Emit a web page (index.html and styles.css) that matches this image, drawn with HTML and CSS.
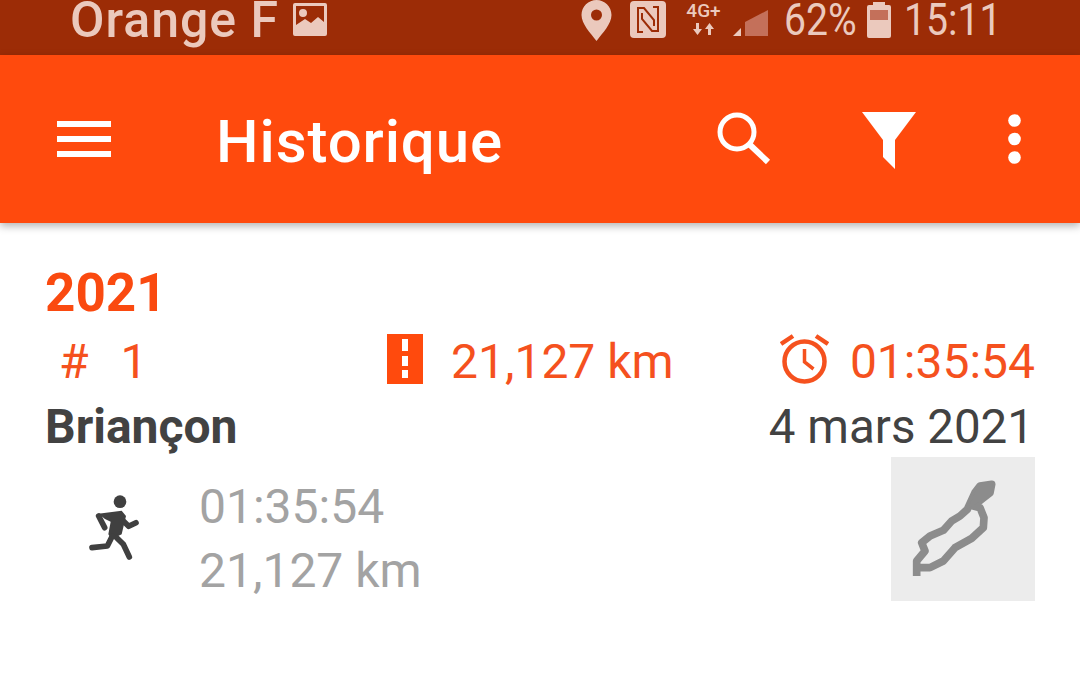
FILE: index.html
```html
<!DOCTYPE html>
<html lang="fr">
<head>
    <meta charset="UTF-8">
    <meta name="viewport" content="width=device-width, initial-scale=1.0">
    <title>Historique</title>
    <link rel="stylesheet" href="styles.css">
</head>
<body>
    <div class="status-bar">
        <div class="status-left">
            <span class="carrier">Orange F</span>
            <svg class="ic-picture" viewBox="0 0 34 33"><path fill-rule="evenodd" d="M2 0h30a2 2 0 0 1 2 2v29a2 2 0 0 1-2 2H2a2 2 0 0 1-2-2V2a2 2 0 0 1 2-2zM3 3v19l9-6 6 4 7-6 6 5V3zM10 6a4 4 0 1 1 0 8 4 4 0 0 1 0-8z"/></svg>
        </div>
        <div class="status-right">
            <svg class="ic-pin" viewBox="0 0 30 41"><path fill-rule="evenodd" d="M15 0c8 0 15 6.500 15 15 0 9-9 18-15 26C9 33 0 24 0 15 0 6.500 7 0 15 0zm0 9.500a5.500 5.500 0 1 0 0 11 5.500 5.500 0 0 0 0-11z"/></svg>
            <svg class="ic-nfc" viewBox="0 0 36 37">
                <rect width="36" height="37" rx="4"/>
                <path d="M13 31H8V7h6l10 12v6M23 6h5v24h-6L12 18v-6" fill="none" stroke="#9c2c06" stroke-width="2"/>
            </svg>
            <div class="net">
                <span class="net-label">4G+</span>
                <svg class="ic-arrows" viewBox="0 0 22 12"><path d="M3 0h3v6h3l-4.500 6L0 6h3zM18 12h-3V6h-3l4.500-6L21 6h-3z"/></svg>
            </div>
            <svg class="ic-signal" viewBox="0 0 36 26"><path d="M0 26l8-8v8z"/><path class="dim" d="M12 26V12L35 0v26z"/></svg>
            <span class="status-text pct">62%</span>
            <svg class="ic-battery" viewBox="0 0 24 36"><path d="M6 0h12v3h4a2 2 0 0 1 2 2v29a2 2 0 0 1-2 2H2a2 2 0 0 1-2-2V5a2 2 0 0 1 2-2h4z"/><rect class="dim" x="3" y="8" width="18" height="10"/></svg>
            <span class="status-text clock">15:11</span>
        </div>
    </div>

    <header class="toolbar">
        <svg class="ic-menu" viewBox="0 0 54 36"><path d="M0 0h54v6H0zM0 15h54v6H0zM0 30h54v6H0z"/></svg>
        <h1 class="title">Historique</h1>
        <svg class="ic-search" viewBox="0 0 54 54"><circle cx="20" cy="20" r="17" fill="none" stroke="#fff" stroke-width="5"/><path d="M31 31l20 19" fill="none" stroke="#fff" stroke-width="6"/></svg>
        <svg class="ic-filter" viewBox="0 0 54 57"><path d="M0 0h54L33 28v29L21 45V28z"/></svg>
        <svg class="ic-more" viewBox="0 0 13 50"><circle cx="6.500" cy="6.500" r="6.300"/><circle cx="6.500" cy="25" r="6.300"/><circle cx="6.500" cy="43.500" r="6.300"/></svg>
    </header>

    <main class="content">
        <div class="year">2021</div>

        <div class="summary">
            <div class="sum-count"><span class="hash">#</span><span>1</span></div>
            <div class="sum-dist">
                <svg class="ic-road" viewBox="0 0 36 50"><path fill-rule="evenodd" d="M0 0h36v50H0zM15 5v12h6V5zm0 17v10h6V22zm0 14v8h6v-8z"/></svg>
                <span>21,127 km</span>
            </div>
            <div class="sum-time">
                <svg class="ic-alarm" viewBox="0 0 49 50" fill="none" stroke="#f5511e"><circle cx="24.500" cy="27.500" r="20" stroke-width="4.500"/><path d="M24.500 15v13l9 7" stroke-width="3.500"/><path d="M1 10L13 2M48 10L36 2" stroke-width="4.500"/></svg>
                <span>01:35:54</span>
            </div>
        </div>

        <div class="activity-head">
            <span class="place">Briançon</span>
            <span class="date">4 mars 2021</span>
        </div>

        <div class="activity">
            <svg class="ic-run" viewBox="0 0 270 270">
                <circle cx="150" cy="62" r="19" fill="#404040"/>
                <path d="M85 98L155 89L168 105L155 160L125 175L115 160L122 122L105 114z" fill="#404040"/>
                <path d="M86 105L104 140M160 120L176 136L198 125M127 165L112 195L66 200M140 170L160 190L178 228" fill="none" stroke="#404040" stroke-width="17" stroke-linecap="round" stroke-linejoin="round"/>
            </svg>
            <div class="activity-stats">
                <div>01:35:54</div>
                <div>21,127 km</div>
            </div>
            <svg class="track" viewBox="33 18 432 432">
                <path d="M110 375V330L135 300L125 275L150 255L190 238L215 210L240 195L262 175L285 125L300 105L335 100L330 125L305 145L280 165L300 170L312 200L310 230L275 262L225 290L190 330L150 350L110 350" fill="none" stroke="#8c8c8c" stroke-width="23" stroke-linejoin="round"/>
                <path d="M262 175L285 125L300 97L340 94L334 128L305 148z" fill="#8c8c8c"/>
            </svg>
        </div>
    </main>
</body>
</html>
```

FILE: styles.css
```css
body {
    margin: 0;
    background-color: #fff;
    font-family: Roboto, sans-serif;
    overflow: hidden;
}

svg {
    display: block;
    flex: none;
}

.status-bar {
    height: 55px;
    background-color: #9c2c06;
    color: #ebc9bd;
    fill: #ebc9bd;
    display: flex;
    justify-content: space-between;
    overflow: hidden;
}

.status-bar .dim {
    fill: #c4705a;
}

.status-left {
    display: flex;
    align-items: center;
    padding-left: 70px;
    height: 40px;
}

.carrier {
    width: 208px;
    font-size: 50px;
    font-weight: 500;
    letter-spacing: 1px;
    line-height: 40px;
    white-space: nowrap;
}

.ic-picture {
    width: 34px;
    height: 33px;
    margin: 0 0 1px 15px;
}

.status-right {
    display: flex;
    align-items: center;
    padding-right: 82px;
    height: 41px;
}

.status-text {
    font-size: 45px;
    line-height: 40px;
    white-space: nowrap;
    margin-bottom: 2px;
    transform: scaleX(0.87);
    transform-origin: left;
}

.pct {
    width: 70px;
    margin-left: 15px;
}

.clock {
    width: 94px;
    margin-left: 13px;
}

.ic-pin {
    width: 31px;
    height: 41px;
}

.ic-nfc {
    width: 36px;
    height: 37px;
    margin: 0 0 2px 18px;
}

.net {
    width: 37px;
    margin-left: 19px;
    padding-top: 3px;
    align-self: flex-start;
    display: flex;
    flex-direction: column;
    align-items: center;
}

.net-label {
    font-size: 19px;
    font-weight: 500;
    line-height: 16px;
}

.ic-arrows {
    width: 22px;
    height: 12px;
    margin-top: 4px;
}

.ic-signal {
    width: 36px;
    height: 26px;
    align-self: flex-start;
    margin: 10px 0 0 11px;
}

.ic-battery {
    width: 24px;
    height: 36px;
    margin: 0 0 1px 13px;
}

.toolbar {
    height: 168px;
    background-color: #ff4a0d;
    display: flex;
    align-items: center;
    box-shadow: 0 3px 8px rgba(0,0,0,0.3);
    fill: #fff;
    position: relative;
}

.ic-menu {
    width: 54px;
    height: 36px;
    margin-left: 57px;
}

.title {
    margin: 6px 0 0 105px;
    flex: 1;
    color: #fff;
    font-size: 60px;
    font-weight: 500;
    letter-spacing: 0.9px;
    line-height: 64px;
}

.ic-search {
    width: 54px;
    height: 54px;
    margin-right: 91px;
}

.ic-filter {
    width: 54px;
    height: 57px;
    margin: 3px 92px 0 0;
}

.ic-more {
    width: 13px;
    height: 50px;
    margin-right: 59px;
}

.content {
    padding: 43px 45px 0 45px;
}

.year {
    color: #fa4a10;
    font-size: 53px;
    font-weight: 700;
    line-height: 54px;
}

.summary {
    display: flex;
    align-items: center;
    margin-top: 14px;
    color: #f5511e;
    font-size: 48px;
    line-height: 54px;
}

.sum-count {
    display: flex;
    gap: 32px;
    width: 342px;
    padding-left: 14px;
    box-sizing: border-box;
}

.sum-dist,
.sum-time {
    display: flex;
    align-items: center;
}

.sum-time {
    margin-left: auto;
}

.ic-road {
    width: 36px;
    height: 50px;
    fill: #ff4a0d;
    margin: 0 28px 6px 0;
}

.ic-alarm {
    width: 49px;
    height: 50px;
    margin: 0 21px 6px 0;
}

.activity-head {
    display: flex;
    justify-content: space-between;
    align-items: center;
    margin-top: 12px;
    font-size: 48px;
    line-height: 50px;
    color: #424242;
}

.place {
    font-weight: 700;
}

.date {
    font-size: 47.500px;
    padding-right: 1px;
}

.activity {
    display: flex;
    align-items: flex-start;
    margin-top: 5px;
}

.ic-run {
    width: 90px;
    height: 90px;
    margin: 24px 0 0 25px;
}

.activity-stats {
    flex: 1;
    margin: 18px 0 0 39px;
    color: #a3a3a3;
    font-size: 48px;
    line-height: 64px;
}

.track {
    width: 144px;
    height: 144px;
    background-color: #ececec;
}
```
